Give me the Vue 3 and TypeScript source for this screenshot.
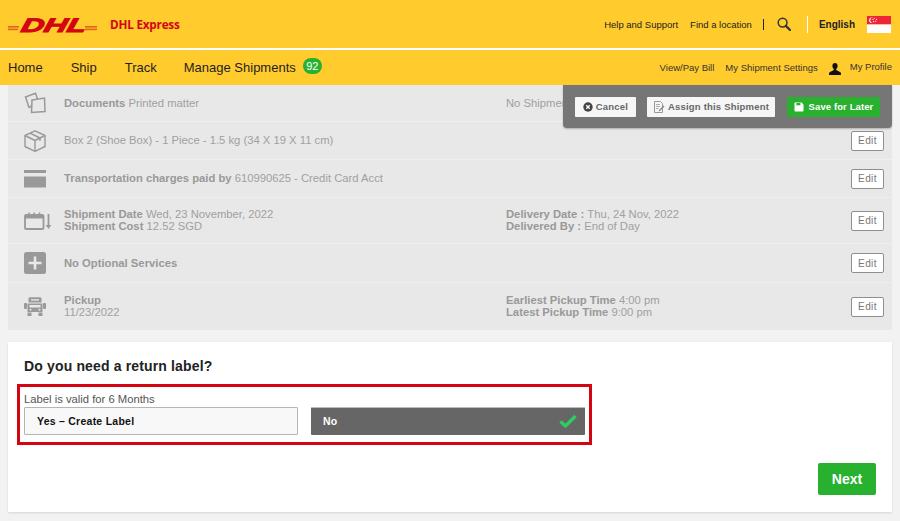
<script setup lang="ts">
interface Row {
  id: string
  cls: string
  left: [string, string][]
  right: [string, string][]
  edit: boolean
}
const rows: Row[] = [
  { id: 'doc', cls: 'h37', left: [['Documents', 'Printed matter']], right: [['', 'No Shipment']], edit: false },
  { id: 'box', cls: 'h38', left: [['', 'Box 2 (Shoe Box) - 1 Piece - 1.5 kg (34 X 19 X 11 cm)']], right: [], edit: true },
  { id: 'card', cls: 'h38', left: [['Transportation charges paid by', '610990625 - Credit Card Acct']], right: [], edit: true },
  { id: 'cal', cls: 'h46', left: [['Shipment Date', 'Wed, 23 November, 2022'], ['Shipment Cost', '12.52 SGD']], right: [['Delivery Date :', 'Thu, 24 Nov, 2022'], ['Delivered By :', 'End of Day']], edit: true },
  { id: 'plus', cls: 'h39', left: [['No Optional Services', '']], right: [], edit: true },
  { id: 'truck', cls: 'h47', left: [['Pickup', ''], ['', '11/23/2022']], right: [['Earliest Pickup Time', '4:00 pm'], ['Latest Pickup Time', '9:00 pm']], edit: true },
]
</script>

<template>
  <div class="page">
    <header class="top">
      <div class="brand">
        <svg class="logo" viewBox="0 0 89 14" width="89" height="14" aria-hidden="true">
          <g fill="#e2631f">
            <rect x="0" y="8" width="11" height="1.6" />
            <rect x="0" y="10.600" width="10" height="1.6" />
            <rect x="77" y="8" width="12" height="1.6" />
            <rect x="77" y="10.600" width="12" height="1.6" />
          </g>
          <g transform="translate(12 14) skewX(-14)">
            <text x="0" y="0" class="logo-text" textLength="65" lengthAdjust="spacingAndGlyphs">DHL</text>
          </g>
        </svg>
        <span class="brand-name">DHL Express</span>
      </div>
      <div class="util">
        <a class="u help">Help and Support</a>
        <a class="u find">Find a location</a>
        <span class="bar-dark"></span>
        <svg class="search" viewBox="0 0 14 14" width="14" height="14" aria-hidden="true">
          <circle cx="5.6" cy="5.6" r="4.4" fill="none" stroke="#333" stroke-width="1.5" />
          <path d="M8.9 8.9 13 13" stroke="#333" stroke-width="2.2" stroke-linecap="round" />
        </svg>
        <span class="bar-white"></span>
        <b class="lang">English</b>
        <svg class="flag" viewBox="0 0 24 17" width="24" height="17" aria-hidden="true">
          <rect width="24" height="8.5" fill="#ee2536" />
          <rect y="8.5" width="24" height="8.5" fill="#fff" />
          <circle cx="5" cy="4.3" r="2.8" fill="#fff" />
          <circle cx="6.1" cy="4.3" r="2.7" fill="#ee2536" />
          <g fill="#fff">
            <circle cx="7.6" cy="2.3" r=".55" />
            <circle cx="9.4" cy="3.4" r=".55" />
            <circle cx="8.8" cy="5.4" r=".55" />
            <circle cx="6.6" cy="5.4" r=".55" />
            <circle cx="6" cy="3.4" r=".55" />
          </g>
        </svg>
      </div>
    </header>

    <nav class="nav">
      <div class="main-links">
        <a class="m home">Home</a>
        <a class="m ship">Ship</a>
        <a class="m track">Track</a>
        <a class="m manage">Manage Shipments</a>
        <span class="badge">92</span>
      </div>
      <div class="sub-links">
        <a class="s bill">View/Pay Bill</a>
        <a class="s settings">My Shipment Settings</a>
        <svg class="person" viewBox="0 0 12 12" width="12" height="12" aria-hidden="true">
          <path d="M6 0C4.3 0 3.4 1.2 3.4 2.9c0 1.3.6 2.5 1.4 3.1v1L.6 9.2C.2 9.5 0 10 0 12h12c0-2-.2-2.500-.6-2.800L7.200 7V6c.8-.6 1.400-1.800 1.400-3.100C8.600 1.200 7.700 0 6 0Z" fill="#111" />
        </svg>
        <a class="s profile">My Profile</a>
      </div>
    </nav>

    <main class="content">
      <section class="list">
        <div class="panel">
          <button class="pbtn cancel">
            <svg viewBox="0 0 10 10" width="10" height="10" aria-hidden="true">
              <circle cx="5" cy="5" r="4.700" fill="#444" />
              <path d="M3.300 3.300l3.400 3.400M6.700 3.300l-3.400 3.400" stroke="#fff" stroke-width="1.300" />
            </svg>
            Cancel
          </button>
          <button class="pbtn assign">
            <svg viewBox="0 0 12 12" width="12" height="12" aria-hidden="true">
              <path d="M1.500 .5h6l2 2v9h-8z" fill="none" stroke="#999" />
              <path d="M3 3.500h4M3 5.500h4M3 7.500h2.500" stroke="#999" stroke-width=".8" />
              <path d="M6 9l4.500-4.500 1 1L7 10l-1.300.3z" fill="#888" />
            </svg>
            Assign this Shipment
          </button>
          <button class="pbtn save">
            <svg viewBox="0 0 10 10" width="10" height="10" aria-hidden="true">
              <path d="M.5 1.200C.5.800.8.500 1.200.500H7.500L9.500 2.500v6.300c0 .4-.3.7-.7.7H1.200c-.4 0-.7-.3-.7-.7Z" fill="#fff" />
              <rect x="2.400" y="1" width="4" height="2.300" fill="#2ab02f" />
            </svg>
            Save for Later
          </button>
        </div>

        <div v-for="r in rows" :key="r.id" class="row" :class="r.cls">
          <div class="ico">
            <svg v-if="r.id === 'doc'" viewBox="0 0 22 22" width="22" height="22" aria-hidden="true">
              <path d="M1.500 5 11.500 1.200 14.500 10 5 15.500Z" fill="none" stroke="#999" stroke-width="1.500" />
              <path d="M8 8 20.500 6 21 19.500 7.500 20.500Z" fill="#e8e8e8" stroke="#999" stroke-width="1.500" />
            </svg>
            <svg v-else-if="r.id === 'box'" viewBox="0 0 22 22" width="22" height="22" aria-hidden="true">
              <g fill="none" stroke="#999" stroke-width="1.400" stroke-linejoin="round">
                <path d="M11 .8 21 5.500v11L11 21.300 1 16.500v-11Z" />
                <path d="M1 5.500 11 10.500 21 5.500M11 10.500v10.800" />
                <path d="M6 3.200 16 8v3" />
              </g>
            </svg>
            <svg v-else-if="r.id === 'card'" viewBox="0 0 22 18" width="22" height="18" aria-hidden="true">
              <rect y="0" width="22" height="3" fill="#999" />
              <rect y="6.500" width="22" height="11" fill="#999" />
            </svg>
            <svg v-else-if="r.id === 'cal'" viewBox="0 0 28 18" width="28" height="18" aria-hidden="true">
              <rect x="1" y="3" width="18.500" height="14" rx="1" fill="none" stroke="#999" stroke-width="1.800" />
              <rect x="1" y="3" width="18.500" height="3.500" fill="#999" />
              <path d="M5 .5v3M10.200 .5v3M15.500 .5v3" stroke="#999" stroke-width="1.500" />
              <path d="M24.500 2v13" stroke="#999" stroke-width="1.800" />
              <path d="M21.700 13h5.600l-2.800 4Z" fill="#999" />
            </svg>
            <svg v-else-if="r.id === 'plus'" viewBox="0 0 22 22" width="22" height="22" aria-hidden="true">
              <rect width="22" height="22" rx="2.500" fill="#999" />
              <path d="M11 4.500v13M4.500 11h13" stroke="#e8e8e8" stroke-width="2.600" />
            </svg>
            <svg v-else viewBox="0 0 22 20" width="22" height="20" aria-hidden="true">
              <path d="M4.500 1.800C4.500 .8 5.300 .3 6.300 .3h9.400c1 0 1.800.5 1.800 1.500V5.500h-13Z" fill="#999" />
              <rect x="7" y="2.200" width="8" height="1.400" fill="#e8e8e8" />
              <rect x="0" y="6" width="3" height="6" rx="1" fill="#999" />
              <rect x="19" y="6" width="3" height="6" rx="1" fill="#999" />
              <path d="M3.500 6.500h15V15h-15Z" fill="#999" />
              <path d="M5.500 8h11v2.500h-11Z" fill="#e8e8e8" />
              <circle cx="6.500" cy="12.700" r="1" fill="#e8e8e8" />
              <circle cx="15.500" cy="12.700" r="1" fill="#e8e8e8" />
              <rect x="3.500" y="15.500" width="4" height="3.500" fill="#999" />
              <rect x="14.500" y="15.500" width="4" height="3.500" fill="#999" />
            </svg>
          </div>
          <div class="col-left">
            <div v-for="(l, i) in r.left" :key="i" class="ln"><b v-if="l[0]">{{ l[0] }}</b><template v-if="l[0] && l[1]">&nbsp;</template>{{ l[1] }}</div>
          </div>
          <div class="col-right">
            <div v-for="(l, i) in r.right" :key="i" class="ln"><b v-if="l[0]">{{ l[0] }}</b><template v-if="l[0] && l[1]">&nbsp;</template>{{ l[1] }}</div>
          </div>
          <button v-if="r.edit" class="edit">Edit</button>
        </div>
      </section>

      <section class="card">
        <h2 class="title">Do you need a return label?</h2>
        <div class="redbox">
          <div class="valid">Label is valid for 6 Months</div>
          <div class="choices">
            <button class="choice yes">Yes – Create Label</button>
            <button class="choice no">
              No
              <svg viewBox="0 0 18 14" width="18" height="14" aria-hidden="true">
                <path d="M1.500 7.500 6.500 12 16.500 2" fill="none" stroke="#2ecc63" stroke-width="3.400" />
              </svg>
            </button>
          </div>
        </div>
        <div class="foot"><button class="next">Next</button></div>
      </section>
    </main>
  </div>
</template>

<style scoped>
.page {
  width: 900px;
  height: 521px;
  overflow: hidden;
  background: #f2f2f2;
  font-family: "Liberation Sans", Arial, sans-serif;
  color: #333;
}
a { color: inherit; text-decoration: none; }
button { font-family: inherit; cursor: pointer; }

.top {
  height: 48px;
  background: #ffcb2d;
  display: flex;
  align-items: center;
  justify-content: space-between;
  border-bottom: 2px solid #fff;
  box-sizing: content-box;
}
.brand { display: flex; align-items: center; padding-left: 8px; }
.logo { display: block; margin-top: 1px; overflow: visible; }
.logo-text {
  font: italic 700 19.500px "Liberation Sans", Arial, sans-serif;
  fill: #d40511;
  stroke: #d40511;
  stroke-width: 1;
}
.brand-name {
  margin-left: 13px;
  font-size: 11.700px;
  font-weight: 700;
  color: #d40511;
  font-family: "Open Sans", "Liberation Sans", sans-serif;
  letter-spacing: -.2px;
}
.util { display: flex; align-items: center; padding-right: 9px; font-size: 9.500px; color: #222; }
.find { margin-left: 12px; }
.bar-dark { width: 1px; height: 11px; background: #222; margin-left: 11px; }
.search { margin-left: 13px; }
.bar-white { width: 1px; height: 17px; background: #fff; margin-left: 16px; }
.lang { margin-left: 11px; font-size: 10px; color: #222; }
.flag { margin-left: 12px; }

.nav {
  height: 35px;
  background: #ffcb2d;
  display: flex;
  align-items: center;
  justify-content: space-between;
  padding: 0 8px;
}
.main-links { display: flex; align-items: center; font-size: 13px; color: #1f1f1f; }
.ship { margin-left: 28px; }
.track { margin-left: 28px; }
.manage { margin-left: 27px; }
.badge {
  margin-left: 7px;
  width: 19px;
  height: 16px;
  border-radius: 8px;
  background: #27b12f;
  color: #fff;
  font-size: 11px;
  text-align: center;
  line-height: 16px;
  margin-top: -3px;
}
.sub-links { display: flex; align-items: center; font-size: 9.500px; color: #333; }
.settings { margin-left: 11px; }
.person { margin-left: 11px; margin-top: 2px; }
.profile { margin-left: 9px; margin-top: -3px; }

.content { padding: 0 8px; }
.list { position: relative; background: #e8e8e8; font-size: 11.250px; color: #a0a0a0; }
.list b { color: #999; }
.row {
  display: flex;
  align-items: center;
  border-bottom: 1px solid #efefef;
  box-sizing: border-box;
  padding-right: 8px;
}
.row:last-child { border-bottom: 0; }
.h37 { height: 37px; }
.h38 { height: 38px; }
.h46 { height: 46px; }
.h39 { height: 39px; }
.h47 { height: 47px; }
.ico { width: 56px; flex: none; padding-left: 16px; box-sizing: border-box; display: flex; }
.ico svg { display: block; }
.col-left { width: 442px; flex: none; padding-bottom: 1px; }
.col-right { flex: 1; padding-bottom: 1px; }
.ln { line-height: 12px; white-space: nowrap; }
.edit {
  width: 33px;
  height: 20px;
  padding: 0;
  background: #fff;
  border: 1px solid #8f8f8f;
  border-radius: 2px;
  color: #777;
  font-size: 10px;
  font-weight: 400;
  letter-spacing: .4px;
}

.panel {
  position: absolute;
  top: 0;
  right: 0;
  width: 329px;
  height: 43px;
  box-sizing: border-box;
  background: #767676;
  border-radius: 0 0 4px 4px;
  box-shadow: 0 1px 2px rgba(0, 0, 0, .25);
  display: flex;
  align-items: center;
  padding: 0 12px;
  gap: 11px;
}
.pbtn {
  height: 20px;
  padding: 0;
  border: 0;
  border-radius: 1px;
  background: #f6f6f6;
  color: #666;
  font-size: 9.500px;
  font-weight: 700;
  letter-spacing: .2px;
  display: flex;
  align-items: center;
  justify-content: center;
  gap: 4px;
}
.cancel { width: 61px; gap: 3px; }
.assign { width: 128px; gap: 3px; }
.save { width: 93px; margin-left: 1px; background: #2ab02f; color: #fff; gap: 5px; letter-spacing: .1px; }

.card {
  margin-top: 12px;
  height: 170px;
  background: #fff;
  box-shadow: 0 1px 2px rgba(0, 0, 0, .12);
  padding: 16px 16px 0 9px;
  box-sizing: border-box;
}
.title {
  margin: 0 0 0 7px;
  font-size: 14px;
  line-height: 16px;
  font-weight: 700;
  color: #222;
  letter-spacing: .15px;
}
.redbox {
  margin-top: 10px;
  width: 575px;
  height: 61px;
  box-sizing: border-box;
  border: 3px solid #d40511;
  padding: 6px 4px 0 4px;
}
.valid { font-size: 11.250px; line-height: 12px; color: #555; }
.choices { display: flex; gap: 13px; margin-top: 2px; }
.choice {
  width: 274px;
  height: 28px;
  padding: 0 12px 1px;
  box-sizing: border-box;
  border-radius: 1px;
  font-size: 10.500px;
  font-weight: 700;
  text-align: left;
  display: flex;
  align-items: center;
  justify-content: space-between;
  letter-spacing: .25px;
}
.yes { background: #f8f8f8; border: 1px solid #b5b5b5; color: #111; }
.no { background: #666; border: 0; border-top: 1px solid #bbb; color: #fff; padding-right: 8px; padding-bottom: 2px; }
.foot { display: flex; justify-content: flex-end; margin-top: 18px; }
.next {
  width: 58px;
  height: 32px;
  padding: 0;
  border: 0;
  border-radius: 2px;
  background: #27b12f;
  color: #fff;
  font-size: 14px;
  font-weight: 700;
}
</style>
